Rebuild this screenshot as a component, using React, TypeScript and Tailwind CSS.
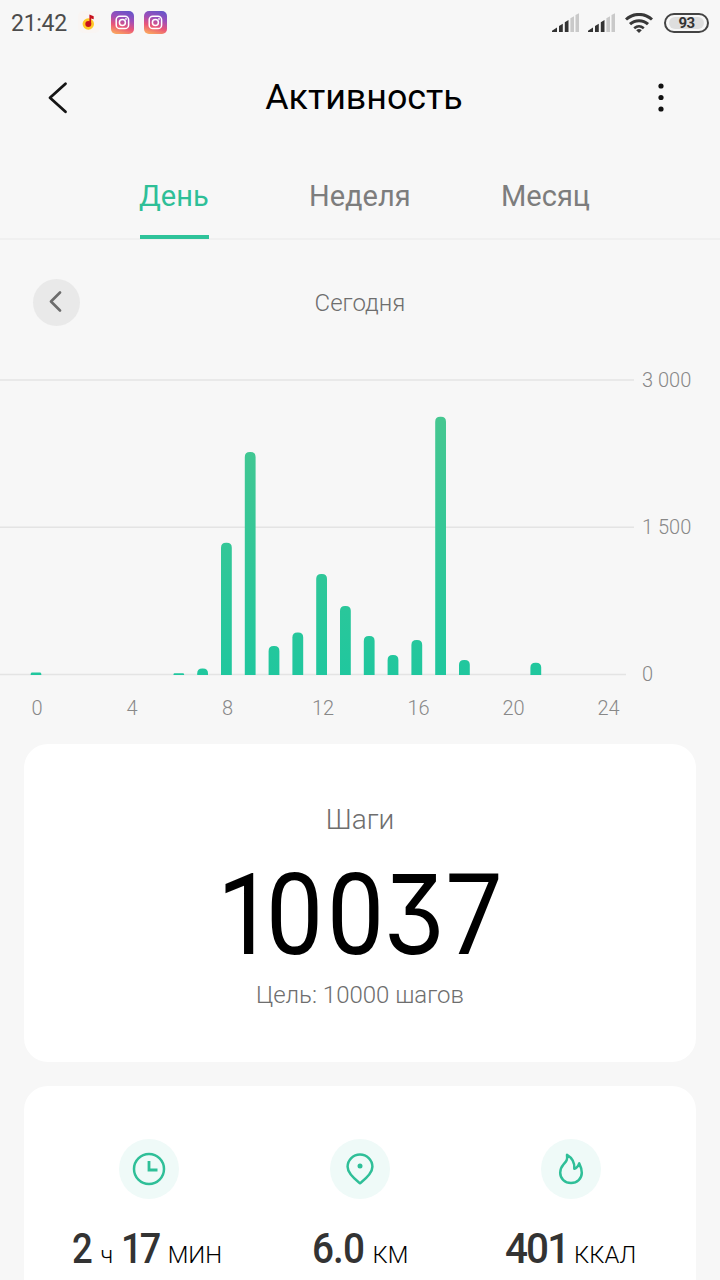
import React from "react";

const bars: { hour: number; top: number }[] = [
  { hour: 0, top: 672.5 },
  { hour: 6, top: 673.2 },
  { hour: 7, top: 668.5 },
  { hour: 8, top: 542.8 },
  { hour: 9, top: 452 },
  { hour: 10, top: 646 },
  { hour: 11, top: 632.5 },
  { hour: 12, top: 574 },
  { hour: 13, top: 606 },
  { hour: 14, top: 636 },
  { hour: 15, top: 655 },
  { hour: 16, top: 640 },
  { hour: 17, top: 416.7 },
  { hour: 18, top: 660 },
  { hour: 21, top: 662.7 },
];

const BASE = 675;

function barPath(hour: number, top: number) {
  const x = 30.6 + hour * 23.8;
  const w = 10.8;
  const r = Math.min(5, BASE - top);
  const c = BASE - top < 4 ? 1 : 5;
  return `M${x} ${BASE}V${top + r}Q${x} ${top} ${x + c} ${top}H${x + w - c}Q${x + w} ${top} ${x + w} ${top + r}V${BASE}Z`;
}

function MusicIcon() {
  return (
    <svg width="22" height="22" viewBox="0 0 22 22">
      <rect width="22" height="22" rx="5" fill="#f9f5f3" />
      <circle cx="10.3" cy="13" r="5.7" fill="#ffc825" />
      <circle cx="10.3" cy="13" r="3" fill="#c8101c" />
      <path d="M11.4 13V3.6l4.3 1.7v3l-2.6-.8V13z" fill="#c8101c" />
    </svg>
  );
}

function InstagramIcon() {
  return (
    <svg width="23" height="23" viewBox="0 0 23 23">
      <defs>
        <linearGradient id="ig" x1="0.65" y1="0" x2="0.35" y2="1">
          <stop offset="0" stopColor="#6a55c8" />
          <stop offset="0.35" stopColor="#a04fb8" />
          <stop offset="0.68" stopColor="#ea5578" />
          <stop offset="1" stopColor="#f9a260" />
        </linearGradient>
      </defs>
      <rect width="23" height="23" rx="5" fill="url(#ig)" />
      <g fill="none" stroke="#fff" strokeWidth="1.5">
        <rect x="5.2" y="5.2" width="12.4" height="12.4" rx="3.6" />
        <circle cx="11.4" cy="11.4" r="3" />
      </g>
      <circle cx="15" cy="7.9" r="0.9" fill="#fff" />
    </svg>
  );
}

function SignalIcon() {
  return (
    <svg width="28" height="20" viewBox="0 0 28 20">
      <path d="M0 19v-1.2l5-3.2V19zM7 19v-5.9l3.8-2.3V19zM12.8 19V9.2L16.5 7v12z" fill="#333" />
      <path d="M18.4 19V5.2l3.6-2V19zM23.5 19V2L27 .2V19z" fill="#c9c9c9" />
    </svg>
  );
}

function WifiIcon() {
  return (
    <svg width="28" height="20" viewBox="0 0 28 20" fill="none" stroke="#383838" strokeWidth="3">
      <path d="M1 6.5C8.2-.3 19.8-.3 27 6.5" />
      <path d="M5 11.2c5-4.7 13-4.7 18 0" />
      <path d="M9.2 15.3c2.9-2.5 6.7-2.5 9.6 0" strokeWidth="2.6" />
      <path d="M11.2 17.2a4.200 4.200 0 0 1 5.600 0L14 20z" fill="#383838" stroke="none" />
    </svg>
  );
}

function Metric({ icon, left, children }: { icon: React.ReactNode; left: string; children: React.ReactNode }) {
  return (
    <div className="flex flex-col">
      <div className="flex h-[60px] w-[60px] items-center justify-center self-center rounded-full bg-[#effaf8]">{icon}</div>
      <div className={`mt-[27px] flex items-baseline whitespace-nowrap leading-[44px] ${left}`}>{children}</div>
    </div>
  );
}

function Value({ className, children }: { className: string; children: React.ReactNode }) {
  return <span className={`block origin-left text-[43px] font-medium text-[#333] ${className}`}>{children}</span>;
}

function Unit({ children }: { children: React.ReactNode }) {
  return <span className="text-[23.8px] font-[350] text-black">{children}</span>;
}

export default function App() {
  return (
    <div className="flex h-[1280px] w-[720px] flex-col overflow-hidden bg-[#f7f7f7] font-[Roboto,sans-serif]">
      <div className="flex h-[46px] shrink-0 items-center px-[11px]">
        <span className="w-[67px] text-[23px] leading-none tracking-[-0.3px] text-[#4c4c4c]">21:42</span>
        <div className="flex items-center gap-[10.5px] pb-[2px]">
          <MusicIcon />
          <InstagramIcon />
          <InstagramIcon />
        </div>
        <div className="ml-auto flex items-center">
          <SignalIcon />
          <span className="w-2" />
          <SignalIcon />
          <span className="w-[9px]" />
          <WifiIcon />
          <div className="ml-[11px] flex h-[20px] w-[45px] items-center justify-center rounded-full border-2 border-[#444] px-[3px] py-[2px]">
            <div className="flex h-full w-full items-center justify-center rounded-full bg-[#dedede] text-[15px] font-bold leading-none tracking-[-0.5px] text-[#333]">93</div>
          </div>
        </div>
      </div>

      <header className="flex h-[103px] shrink-0 items-center justify-between pl-[47px] pr-[53px]">
        <svg width="22" height="34" viewBox="0 0 22 34" fill="none" stroke="#151515" strokeWidth="2.8" strokeLinecap="round" strokeLinejoin="round">
          <path d="M18.5 2.8L3 16.8l15.500 14" />
        </svg>
        <h1 className="ml-[4px] text-[35.8px] leading-none text-black">Активность</h1>
        <svg width="12" height="34" viewBox="0 0 12 34" fill="#111">
          <circle cx="6" cy="5" r="2.6" />
          <circle cx="6" cy="16.5" r="2.6" />
          <circle cx="6" cy="28" r="2.6" />
        </svg>
      </header>

      <nav className="flex h-[91px] shrink-0 items-end border-b-2 border-[#f0f0f0] pl-[140px] text-[29px] leading-none text-[#7d7d7d]">
        <div className="-mb-px h-[57px] w-[69px] border-b-4 border-[#2fc39a] text-[#2ebf97]">
          <span className="-ml-px">День</span>
        </div>
        <div className="ml-[100px] h-[56px] w-[101px]">Неделя</div>
        <div className="ml-[91px] h-[56px]">Месяц</div>
      </nav>

      <div className="grid h-[124px] shrink-0 grid-cols-[1fr_auto_1fr] items-center px-[33px]">
        <div className="flex h-[47px] w-[47px] items-center justify-center rounded-full bg-[#e9e9e9]">
          <svg width="16" height="22" viewBox="0 0 16 22" fill="none" stroke="#6c6c6c" strokeWidth="2.6" strokeLinecap="round" strokeLinejoin="round">
            <path d="M11 1.5L2 10.5l9 9" />
          </svg>
        </div>
        <span className="pt-[2px] text-2xl font-light leading-none text-[#6e6e6e]">Сегодня</span>
      </div>

      <svg className="shrink-0" width="720" height="380" viewBox="0 364 720 380">
        <defs>
          <linearGradient id="bar" gradientUnits="userSpaceOnUse" x1="0" y1="380" x2="0" y2="675">
            <stop offset="0" stopColor="#4bc78f" />
            <stop offset="1" stopColor="#20c79e" />
          </linearGradient>
        </defs>
        <g stroke="#e4e4e4" strokeWidth="1.5">
          <path d="M0 380H634" />
          <path d="M0 527.3H634" />
          <path d="M0 674.5H626" />
        </g>
        <g fill="url(#bar)">
          {bars.map((b) => (
            <path key={b.hour} d={barPath(b.hour, b.top)} />
          ))}
        </g>
        <g fontSize="20" fontWeight="300" fill="#888">
          <text x="642" y="386.5">3 000</text>
          <text x="642" y="534">1 500</text>
          <text x="642" y="681">0</text>
          <g textAnchor="middle">
            <text x="37" y="715">0</text>
            <text x="132" y="715">4</text>
            <text x="227.5" y="715">8</text>
            <text x="323" y="715">12</text>
            <text x="418.5" y="715">16</text>
            <text x="513.5" y="715">20</text>
            <text x="608.5" y="715">24</text>
          </g>
        </g>
      </svg>

      <section className="mx-6 flex h-[318px] shrink-0 flex-col items-center rounded-3xl bg-white">
        <div className="mt-[62px] text-[28px] font-light leading-[28px] text-[#6e6e6e]">Шаги</div>
        <div className="mt-[15px] flex h-[130px] scale-x-[0.9] items-baseline text-[113px] leading-[130px] text-black">
          <span className="tracking-[-9px]">1</span>
          <span className="tracking-[4.3px]">0</span>
          <span className="tracking-[-1px]">0</span>
          <span className="font-[Inter,sans-serif] text-[110px] tracking-[1px] [font-feature-settings:'cv09']">3</span>
          <span>7</span>
        </div>
        <div className="mt-[4px] text-2xl font-light leading-[24px] text-[#6e6e6e]">Цель: 10000 шагов</div>
      </section>

      <section className="mx-6 mt-6 flex h-[194px] shrink-0 rounded-t-3xl bg-white pt-[53px]">
        <div className="grid w-full grid-cols-[250px_171px_251px]">
          <Metric
            left="pl-[48px]"
            icon={
              <svg width="34" height="34" viewBox="0 0 34 34" fill="none" stroke="#2fbf98" strokeWidth="2.5">
                <circle cx="17" cy="17" r="15" />
                <path d="M17 9v9h8.5" strokeWidth="2.8" />
              </svg>
            }
          >
            <Value className="w-[28.5px] scale-x-[0.85]">2</Value>
            <Unit>ч</Unit>
            <Value className="ml-[8px] w-[46.5px] scale-x-[0.88] tracking-[-3px]">17</Value>
            <Unit>МИН</Unit>
          </Metric>
          <Metric
            left="pl-[38px]"
            icon={
              <svg width="34" height="34" viewBox="0 0 34 34" fill="none" stroke="#2fbf98" strokeWidth="2.5" strokeLinejoin="round">
                <path d="M17 31.3c-4-3.2-12.4-9.4-12.4-16.5a12.4 12.4 0 0 1 24.8 0c0 7.1-8.4 13.3-12.4 16.5z" />
                <circle cx="17" cy="14" r="2.5" fill="#2fbf98" stroke="none" />
              </svg>
            }
          >
            <Value className="w-[60.5px] scale-x-[0.9] tracking-[-1px]">6.0</Value>
            <Unit>КМ</Unit>
          </Metric>
          <Metric
            left="pl-[60px]"
            icon={
              <svg width="34" height="34" viewBox="0 0 34 34" fill="none" stroke="#2fbf98" strokeWidth="2.5" strokeLinejoin="round">
                <path d="M13 2.8c.8 5.2-1 6.8-3.2 9.2C7.2 15 6.2 17.6 6.2 20.8c0 6 4.7 10.3 10.8 10.3s10.8-4.4 10.8-10.3c0-4-1.2-6.6-2.6-9.4-.9 2.6-2.3 4.700-4.900 5.400C20.800 10.500 17.500 5.500 13 2.800z" />
              </svg>
            }
          >
            <Value className="w-[69px] scale-x-[0.94] tracking-[-2px]">401</Value>
            <Unit>ККАЛ</Unit>
          </Metric>
        </div>
      </section>
    </div>
  );
}
